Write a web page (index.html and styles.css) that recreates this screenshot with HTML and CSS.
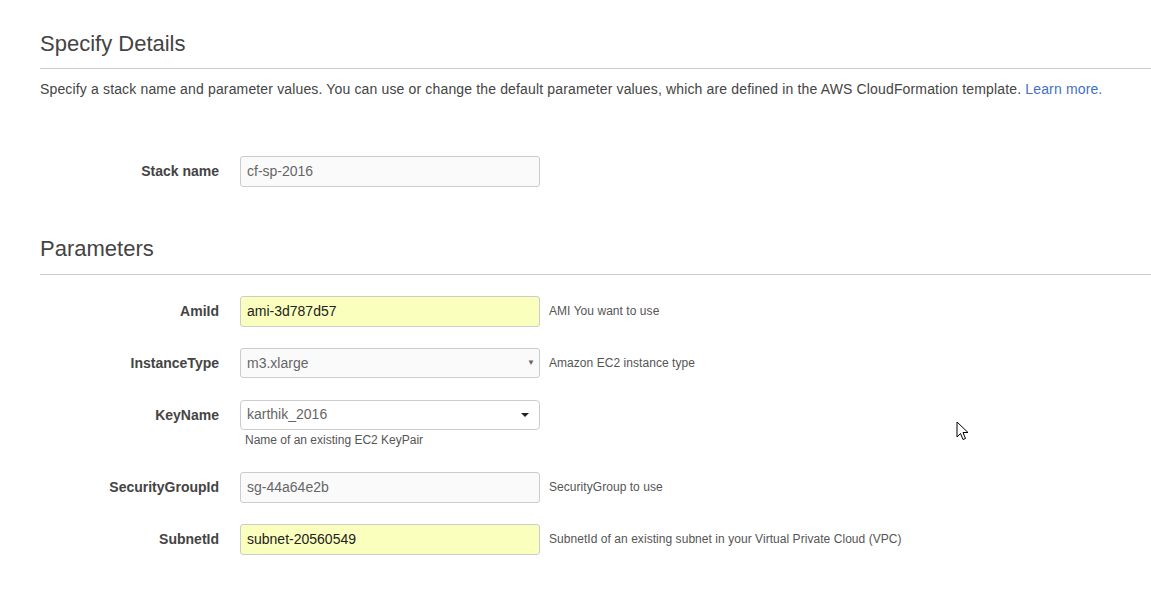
FILE: index.html
```html
<!DOCTYPE html>
<html>
<head>
<meta charset="utf-8">
<link rel="stylesheet" href="styles.css">
</head>
<body>
<div class="page">
  <h2 class="section-title">Specify Details</h2>
  <p class="desc">Specify a stack name and parameter values. You can use or change the default parameter values, which are defined in the AWS CloudFormation template. <a href="#" class="link">Learn more.</a></p>

  <div class="stack-row">
    <div class="row">
      <div class="label">Stack name</div>
      <div class="field"><div class="input">cf-sp-2016</div></div>
    </div>
  </div>

  <h2 class="section-title params-title">Parameters</h2>

  <div class="params">
    <div class="row">
      <div class="label">AmiId</div>
      <div class="field"><div class="input filled">ami-3d787d57</div></div>
      <div class="help">AMI You want to use</div>
    </div>
    <div class="row">
      <div class="label">InstanceType</div>
      <div class="field"><div class="input select native">m3.xlarge<span class="tri">▼</span></div></div>
      <div class="help">Amazon EC2 instance type</div>
    </div>
    <div class="row">
      <div class="label">KeyName</div>
      <div class="field">
        <div class="input select boot">karthik_2016<span class="caret"></span></div>
        <div class="help-below">Name of an existing EC2 KeyPair</div>
      </div>
    </div>
    <div class="row">
      <div class="label">SecurityGroupId</div>
      <div class="field"><div class="input">sg-44a64e2b</div></div>
      <div class="help">SecurityGroup to use</div>
    </div>
    <div class="row">
      <div class="label">SubnetId</div>
      <div class="field"><div class="input filled">subnet-20560549</div></div>
      <div class="help">SubnetId of an existing subnet in your Virtual Private Cloud (VPC)</div>
    </div>
  </div>
</div>
<svg class="cursor" width="14" height="22" viewBox="0 0 14 22"><path d="M1 1 L1 16 L4.5 12.5 L7 18.5 L9.5 17.5 L7 11.5 L12 11.5 Z" fill="#fff" stroke="#000" stroke-width="1" stroke-linejoin="miter"/></svg>
</body>
</html>
```

FILE: styles.css
```css
html, body {
  margin: 0;
  padding: 0;
  background: #fff;
}
body {
  font-family: "Liberation Sans", Arial, sans-serif;
  color: #444;
  position: relative;
  height: 593px;
  overflow: hidden;
}
.page {
  padding-left: 40px;
}
.section-title {
  font-size: 22px;
  font-weight: normal;
  line-height: 28px;
  margin: 30px 0 0;
  padding-bottom: 10px;
  border-bottom: 1px solid #ccc;
  color: #444;
}
.params-title {
  margin-top: 48px;
  padding-bottom: 11px;
}
.desc {
  font-size: 14px;
  letter-spacing: 0.15px;
  line-height: 18px;
  margin: 11px 0 0;
  color: #444;
  white-space: nowrap;
}
.link {
  color: #4271c6;
  text-decoration: none;
}
.stack-row {
  margin-top: 58px;
}
.params {
  margin-top: 21px;
  display: flex;
  flex-direction: column;
  gap: 21px;
}
.row {
  display: flex;
  align-items: flex-start;
}
.label {
  width: 180px;
  text-align: right;
  font-size: 14px;
  font-weight: bold;
  line-height: 31px;
  color: #444;
  box-sizing: border-box;
  padding-right: 1px;
}
.field {
  margin-left: 20px;
  width: 300px;
}
.input {
  box-sizing: border-box;
  height: 31px;
  border: 1px solid #ccc;
  border-radius: 3px;
  background: #fafafa;
  font-size: 14px;
  line-height: 29px;
  padding-left: 6px;
  color: #666;
  position: relative;
}
.filled {
  background: #faffbd;
  color: #222;
}
.select.native {
  height: 30px;
  line-height: 28px;
  background: #fafafa;
  padding-left: 6px;
}
.select.boot {
  height: 30px;
  line-height: 26px;
  background: #fff;
  border-radius: 4px;
}
.tri {
  position: absolute;
  right: 4px;
  top: 0;
  font-size: 8px;
  color: #666;
}
.caret {
  position: absolute;
  right: 10px;
  top: 12px;
  width: 0;
  height: 0;
  border-left: 4px solid transparent;
  border-right: 4px solid transparent;
  border-top: 4px solid #222;
}
.help {
  margin-left: 9px;
  font-size: 12px;
  letter-spacing: 0.05px;
  line-height: 31px;
  color: #555;
}
.help-below {
  font-size: 12px;
  line-height: 21px;
  padding-left: 5px;
  color: #555;
}
.cursor {
  position: absolute;
  left: 956px;
  top: 421px;
}
```
